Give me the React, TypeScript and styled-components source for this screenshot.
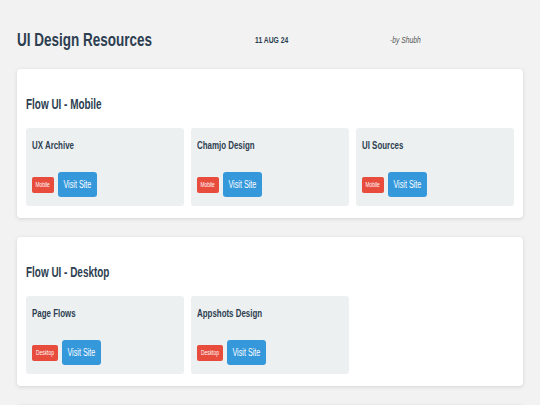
import React from "react";
import styled, { createGlobalStyle } from "styled-components";

const GlobalStyle = createGlobalStyle`
  html, body {
    margin: 0;
    padding: 0;
    background: #f2f2f2;
  }
  body {
    font-family: "Liberation Sans", Arial, sans-serif;
    color: #2c3e50;
  }
  * {
    box-sizing: border-box;
  }
`;

// 좁은 글꼴 느낌 (condensed)
const Narrow = styled.span<{ $scale?: number; $origin?: string }>`
  display: inline-block;
  white-space: nowrap;
  transform: scaleX(${({ $scale }) => $scale ?? 0.73});
  transform-origin: ${({ $origin }) => $origin ?? "left center"};
`;

const Page = styled.div`
  padding: 29px 17px 0 17px;
`;

// 상단 헤더
const Header = styled.header`
  display: grid;
  grid-template-columns: 238px 135px 1fr;
  align-items: center;
  height: 22px;
`;

const Title = styled.h1`
  margin: 0;
  font-size: 18px;
  font-weight: 700;
  color: #2c3e50;
`;

const DateText = styled.span`
  font-size: 9px;
  font-weight: 700;
  color: #2c3e50;
`;

const Author = styled.span`
  font-size: 9px;
  font-style: italic;
  color: #555;
`;

const Sections = styled.div`
  display: flex;
  flex-direction: column;
  gap: 19px;
  margin-top: 18px;
`;

const Section = styled.section`
  background: #fff;
  border-radius: 4px;
  box-shadow: 0 1px 4px rgba(0, 0, 0, 0.12);
  padding: 9px 9px 12px 9px;
`;

const SectionTitle = styled.h2`
  margin: 18px 0 16px 0;
  font-size: 14px;
  line-height: 16px;
  font-weight: 700;
  color: #2c3e50;
`;

const Grid = styled.div`
  display: grid;
  grid-template-columns: repeat(3, 1fr);
  gap: 7px;
`;

const Item = styled.div`
  background: #ecf0f1;
  border-radius: 3px;
  height: 78px;
  padding: 6px 6px 9px 6px;
  display: flex;
  flex-direction: column;
  justify-content: space-between;
`;

const ItemTitle = styled.h3`
  margin: 5px 0 0 0;
  font-size: 11px;
  line-height: 12px;
  font-weight: 700;
  color: #2c3e50;
`;

const Actions = styled.div`
  display: flex;
  align-items: center;
  gap: 4px;
`;

const Badge = styled.span<{ $width: number }>`
  background: #e74c3c;
  color: #fff;
  font-size: 6.5px;
  width: ${({ $width }) => $width}px;
  height: 16px;
  border-radius: 2px;
  display: inline-flex;
  align-items: center;
  justify-content: center;
`;

const VisitButton = styled.a`
  background: #3498db;
  color: #fff;
  font-size: 10px;
  width: 39px;
  height: 25px;
  border-radius: 3px;
  display: inline-flex;
  align-items: center;
  justify-content: center;
  text-decoration: none;
`;

interface Resource {
  name: string;
}

interface SectionData {
  title: string;
  tag: string;
  tagWidth: number;
  items: Resource[];
}

const sections: SectionData[] = [
  {
    title: "Flow UI - Mobile",
    tag: "Mobile",
    tagWidth: 22,
    items: [{ name: "UX Archive" }, { name: "Chamjo Design" }, { name: "UI Sources" }],
  },
  {
    title: "Flow UI - Desktop",
    tag: "Desktop",
    tagWidth: 26,
    items: [{ name: "Page Flows" }, { name: "Appshots Design" }],
  },
  {
    title: "Inspiration",
    tag: "Web",
    tagWidth: 18,
    items: [{ name: "Dribbble" }],
  },
];

export default function App() {
  return (
    <>
      <GlobalStyle />
      <Page>
        <Header>
          <Title>
            <Narrow $scale={0.75}>UI Design Resources</Narrow>
          </Title>
          <DateText>
            <Narrow $scale={0.75}>11 AUG 24</Narrow>
          </DateText>
          <Author>
            <Narrow $scale={0.75}>-by Shubh</Narrow>
          </Author>
        </Header>
        <Sections>
          {sections.map((s) => (
            <Section key={s.title}>
              <SectionTitle>
                <Narrow $scale={0.71}>{s.title}</Narrow>
              </SectionTitle>
              <Grid>
                {s.items.map((it) => (
                  <Item key={it.name}>
                    <ItemTitle>
                      <Narrow $scale={0.72}>{it.name}</Narrow>
                    </ItemTitle>
                    <Actions>
                      <Badge $width={s.tagWidth}>
                        <Narrow $scale={0.75} $origin="center">{s.tag}</Narrow>
                      </Badge>
                      <VisitButton href="#">
                        <Narrow $scale={0.72} $origin="center">Visit Site</Narrow>
                      </VisitButton>
                    </Actions>
                  </Item>
                ))}
              </Grid>
            </Section>
          ))}
        </Sections>
      </Page>
    </>
  );
}
